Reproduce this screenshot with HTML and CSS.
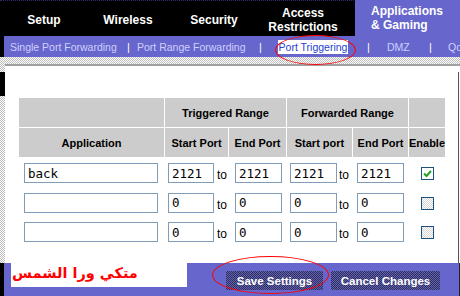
FILE: index.html
```html
<!DOCTYPE html>
<html lang="en">
<head>
    <meta charset="UTF-8">
    <title>Port Triggering</title>
    <link rel="stylesheet" href="styles.css">
</head>
<body>
    <div class="page">
        <div class="tabs">
            <div class="tab tab-setup">Setup</div>
            <div class="tab tab-wireless">Wireless</div>
            <div class="tab tab-security">Security</div>
            <div class="tab tab-access">Access<br>Restrictions</div>
            <div class="tab-gap"></div>
            <div class="tab tab-active">Applications<br>&amp; Gaming</div>
        </div>

        <div class="subnav">
            <div class="subnav-inner">
                <span></span>
                <span class="sub-link">Single Port Forwarding</span>
                <span class="sep">|</span>
                <span class="sub-link">Port Range Forwarding</span>
                <span class="sep">|</span>
                <span class="sub-link current">Port Triggering</span>
                <span></span>
                <span class="sep">|</span>
                <span class="sub-link">DMZ</span>
                <span class="sep">|</span>
                <span class="sub-link">QoS</span>
            </div>
        </div>

        <div class="main">
            <div class="left-strip">
                <div class="black-block"></div>
            </div>
            <div class="panel-wrap">
                <div class="panel">
                    <div class="panel-body">
                        <div class="grid head">
                            <div class="hcell"></div>
                            <div class="hcell span2">Triggered Range</div>
                            <div class="hcell span2">Forwarded Range</div>
                            <div class="hcell"></div>
                            <div class="hcell">Application</div>
                            <div class="hcell">Start Port</div>
                            <div class="hcell">End Port</div>
                            <div class="hcell">Start port</div>
                            <div class="hcell">End Port</div>
                            <div class="hcell">Enable</div>
                        </div>

                        <div class="grid rows">
                            <div class="cell c-app"><input class="field app-field" type="text" value="back"></div>
                            <div class="cell c-start"><input class="field port-field" type="text" value="2121"><span class="to">to</span></div>
                            <div class="cell c-end"><input class="field port-field" type="text" value="2121"></div>
                            <div class="cell c-fstart"><input class="field port-field" type="text" value="2121"><span class="to">to</span></div>
                            <div class="cell c-fend"><input class="field port-field" type="text" value="2121"></div>
                            <div class="cell c-enable">
                                <span class="check checked">
                                    <svg width="11" height="11" viewBox="0 0 11 11"><path d="M2 5.5 L4.5 8 L9 3" fill="none" stroke="#21a121" stroke-width="2"/></svg>
                                </span>
                            </div>

                            <div class="cell c-app"><input class="field app-field" type="text" value=""></div>
                            <div class="cell c-start"><input class="field port-field" type="text" value="0"><span class="to">to</span></div>
                            <div class="cell c-end"><input class="field port-field" type="text" value="0"></div>
                            <div class="cell c-fstart"><input class="field port-field" type="text" value="0"><span class="to">to</span></div>
                            <div class="cell c-fend"><input class="field port-field" type="text" value="0"></div>
                            <div class="cell c-enable"><span class="check"></span></div>

                            <div class="cell c-app"><input class="field app-field" type="text" value=""></div>
                            <div class="cell c-start"><input class="field port-field" type="text" value="0"><span class="to">to</span></div>
                            <div class="cell c-end"><input class="field port-field" type="text" value="0"></div>
                            <div class="cell c-fstart"><input class="field port-field" type="text" value="0"><span class="to">to</span></div>
                            <div class="cell c-fend"><input class="field port-field" type="text" value="0"></div>
                            <div class="cell c-enable"><span class="check"></span></div>
                        </div>
                    </div>
                    <div class="panel-edge"></div>
                </div>
            </div>
        </div>

        <div class="footer">
            <div class="foot-black"></div>
            <div class="note">متكي ورا الشمس</div>
            <button class="btn btn-save">Save Settings</button>
            <button class="btn btn-cancel">Cancel Changes</button>
            <div class="foot-edge"></div>
        </div>

        <!-- red marks drawn over the screenshot -->
        <div class="ring ring-tab"></div>
        <div class="ring ring-save"></div>
    </div>
</body>
</html>
```

FILE: styles.css
```css
* {
    margin: 0;
    padding: 0;
    box-sizing: border-box;
}

body {
    font-family: 'Liberation Sans', Arial, sans-serif;
    background: #fff;
}

.page {
    position: relative;
    width: 460px;
    height: 296px;
    overflow: hidden;
}

/* top tabs */
.tabs {
    display: flex;
    height: 36px;
    background: #000;
    border-top: 1px dotted #2a2a66;
}

.tab {
    display: flex;
    align-items: center;
    justify-content: center;
    padding-top: 3px;
    color: #fff;
    font-size: 12px;
    font-weight: bold;
    line-height: 14px;
    text-align: center;
}

.tab-setup { width: 88px; }
.tab-wireless { width: 80px; }
.tab-security { width: 92px; }
.tab-access { width: 86px; }
.tab-gap { width: 9px; }

.tab-active {
    flex: 1;
    justify-content: flex-start;
    padding: 0 0 0 16px;
    margin-top: -1px;
    background: #6666cc;
    text-align: left;
}

/* sub navigation */
.subnav {
    height: 21px;
    background: #000;
    padding-left: 4px;
}

.subnav-inner {
    height: 100%;
    display: grid;
    grid-template-columns: 6px 117px 10px 122px 19px 70px 19px 20px 42px 19px 12px;
    align-items: center;
    background: #6666cc;
    overflow: hidden;
}

.sub-link {
    color: #d0d0ff;
    font-size: 10.5px;
    white-space: nowrap;
    overflow: hidden;
}

.sep {
    color: #fff;
    font-size: 11px;
}

.sub-link.current {
    height: 14px;
    line-height: 14px;
    background: #fff;
    color: #1f3fd0;
    text-align: center;
}

/* main area */
.main {
    display: flex;
    height: 206px;
    background: repeating-conic-gradient(#bcbcbc 0 25%, #fff 0 50%) 0 0 / 2px 2px;
}

.left-strip {
    width: 5px;
}

.black-block {
    width: 5px;
    height: 24px;
    margin-top: 15px;
    background: #000;
}

.panel-wrap {
    flex: 1;
    display: flex;
    flex-direction: column;
    padding-top: 7px;
}

.panel {
    flex: 1;
    display: flex;
    background: #fff;
    border-top: 2px solid #a0a0a0;
}

.panel-body {
    flex: 1;
    padding: 32px 0 0 14px;
}

.panel-edge {
    width: 1px;
    margin: 6px 1px 0 0;
    background: #555;
}

.grid {
    display: grid;
    grid-template-columns: 145px 63px 57px 65px 55px 36px;
    column-gap: 1px;
    width: 426px;
}

.head {
    row-gap: 1px;
}

.hcell {
    height: 29px;
    display: flex;
    align-items: center;
    justify-content: center;
    background: #cccccc;
    color: #000;
    font-size: 11px;
    font-weight: bold;
    white-space: nowrap;
}

.span2 {
    grid-column: span 2;
}

.rows {
    margin-top: 6px;
    row-gap: 9.5px;
}

.cell {
    display: flex;
    align-items: flex-start;
    height: 20px;
}

.field {
    height: 20px;
    padding: 0 3px;
    border: 1px solid #7f9db9;
    background: #fff;
    color: #000;
    font-family: 'DejaVu Sans Mono', monospace;
    font-size: 12.5px;
    outline: none;
}

.app-field {
    width: 134px;
    margin-left: 5px;
}

.port-field {
    width: 46px;
}

.c-start .field { margin-left: 3px; }
.c-end .field { margin-left: 6px; width: 47px; }
.c-fstart .field { margin-left: 3px; width: 47px; }
.c-fend .field { margin-left: 4px; width: 47px; }

.to {
    margin-left: 3px;
    padding-top: 5px;
    font-size: 12px;
    color: #000;
}

.c-fstart .to {
    margin-left: 2px;
}

.check {
    display: flex;
    align-items: center;
    justify-content: center;
    width: 13px;
    height: 13px;
    margin: 4px 0 0 12px;
    border: 1px solid #1c5180;
    background: repeating-conic-gradient(#d4d4d4 0 25%, #fff 0 50%) 0 0 / 2px 2px;
}

.check.checked {
    background: #fff;
}

/* bottom bar */
.footer {
    display: flex;
    align-items: flex-start;
    height: 33px;
    background: #6666cc;
}

.foot-black {
    width: 4px;
    height: 100%;
    margin-right: 7px;
    background: #000;
}

.note {
    width: 176px;
    height: 24px;
    padding: 2px 0 0 1px;
    background: #fff;
    color: #f00;
    font-family: 'DejaVu Sans', sans-serif;
    font-size: 14.5px;
    font-weight: bold;
    text-align: left;
}

.btn {
    height: 19px;
    margin-top: 8px;
    border: none;
    background: repeating-conic-gradient(#2c2c62 0 25%, #6464ac 0 50%) 0 0 / 2px 2px;
    color: #fff;
    font-family: 'Liberation Sans', Arial, sans-serif;
    font-size: 11.5px;
    font-weight: bold;
}

.btn-save {
    width: 97px;
    margin-left: 39px;
}

.btn-cancel {
    width: 109px;
    margin-left: 8px;
}

.foot-edge {
    width: 1px;
    height: 100%;
    margin-left: auto;
    background: #222;
}

/* hand-drawn red circles */
.ring {
    position: absolute;
    border: 1px solid #f00;
    border-radius: 50%;
}

.ring-tab {
    left: 275px;
    top: 35px;
    width: 81px;
    height: 30px;
}

.ring-save {
    left: 212px;
    top: 256px;
    width: 117px;
    height: 38px;
}
```
